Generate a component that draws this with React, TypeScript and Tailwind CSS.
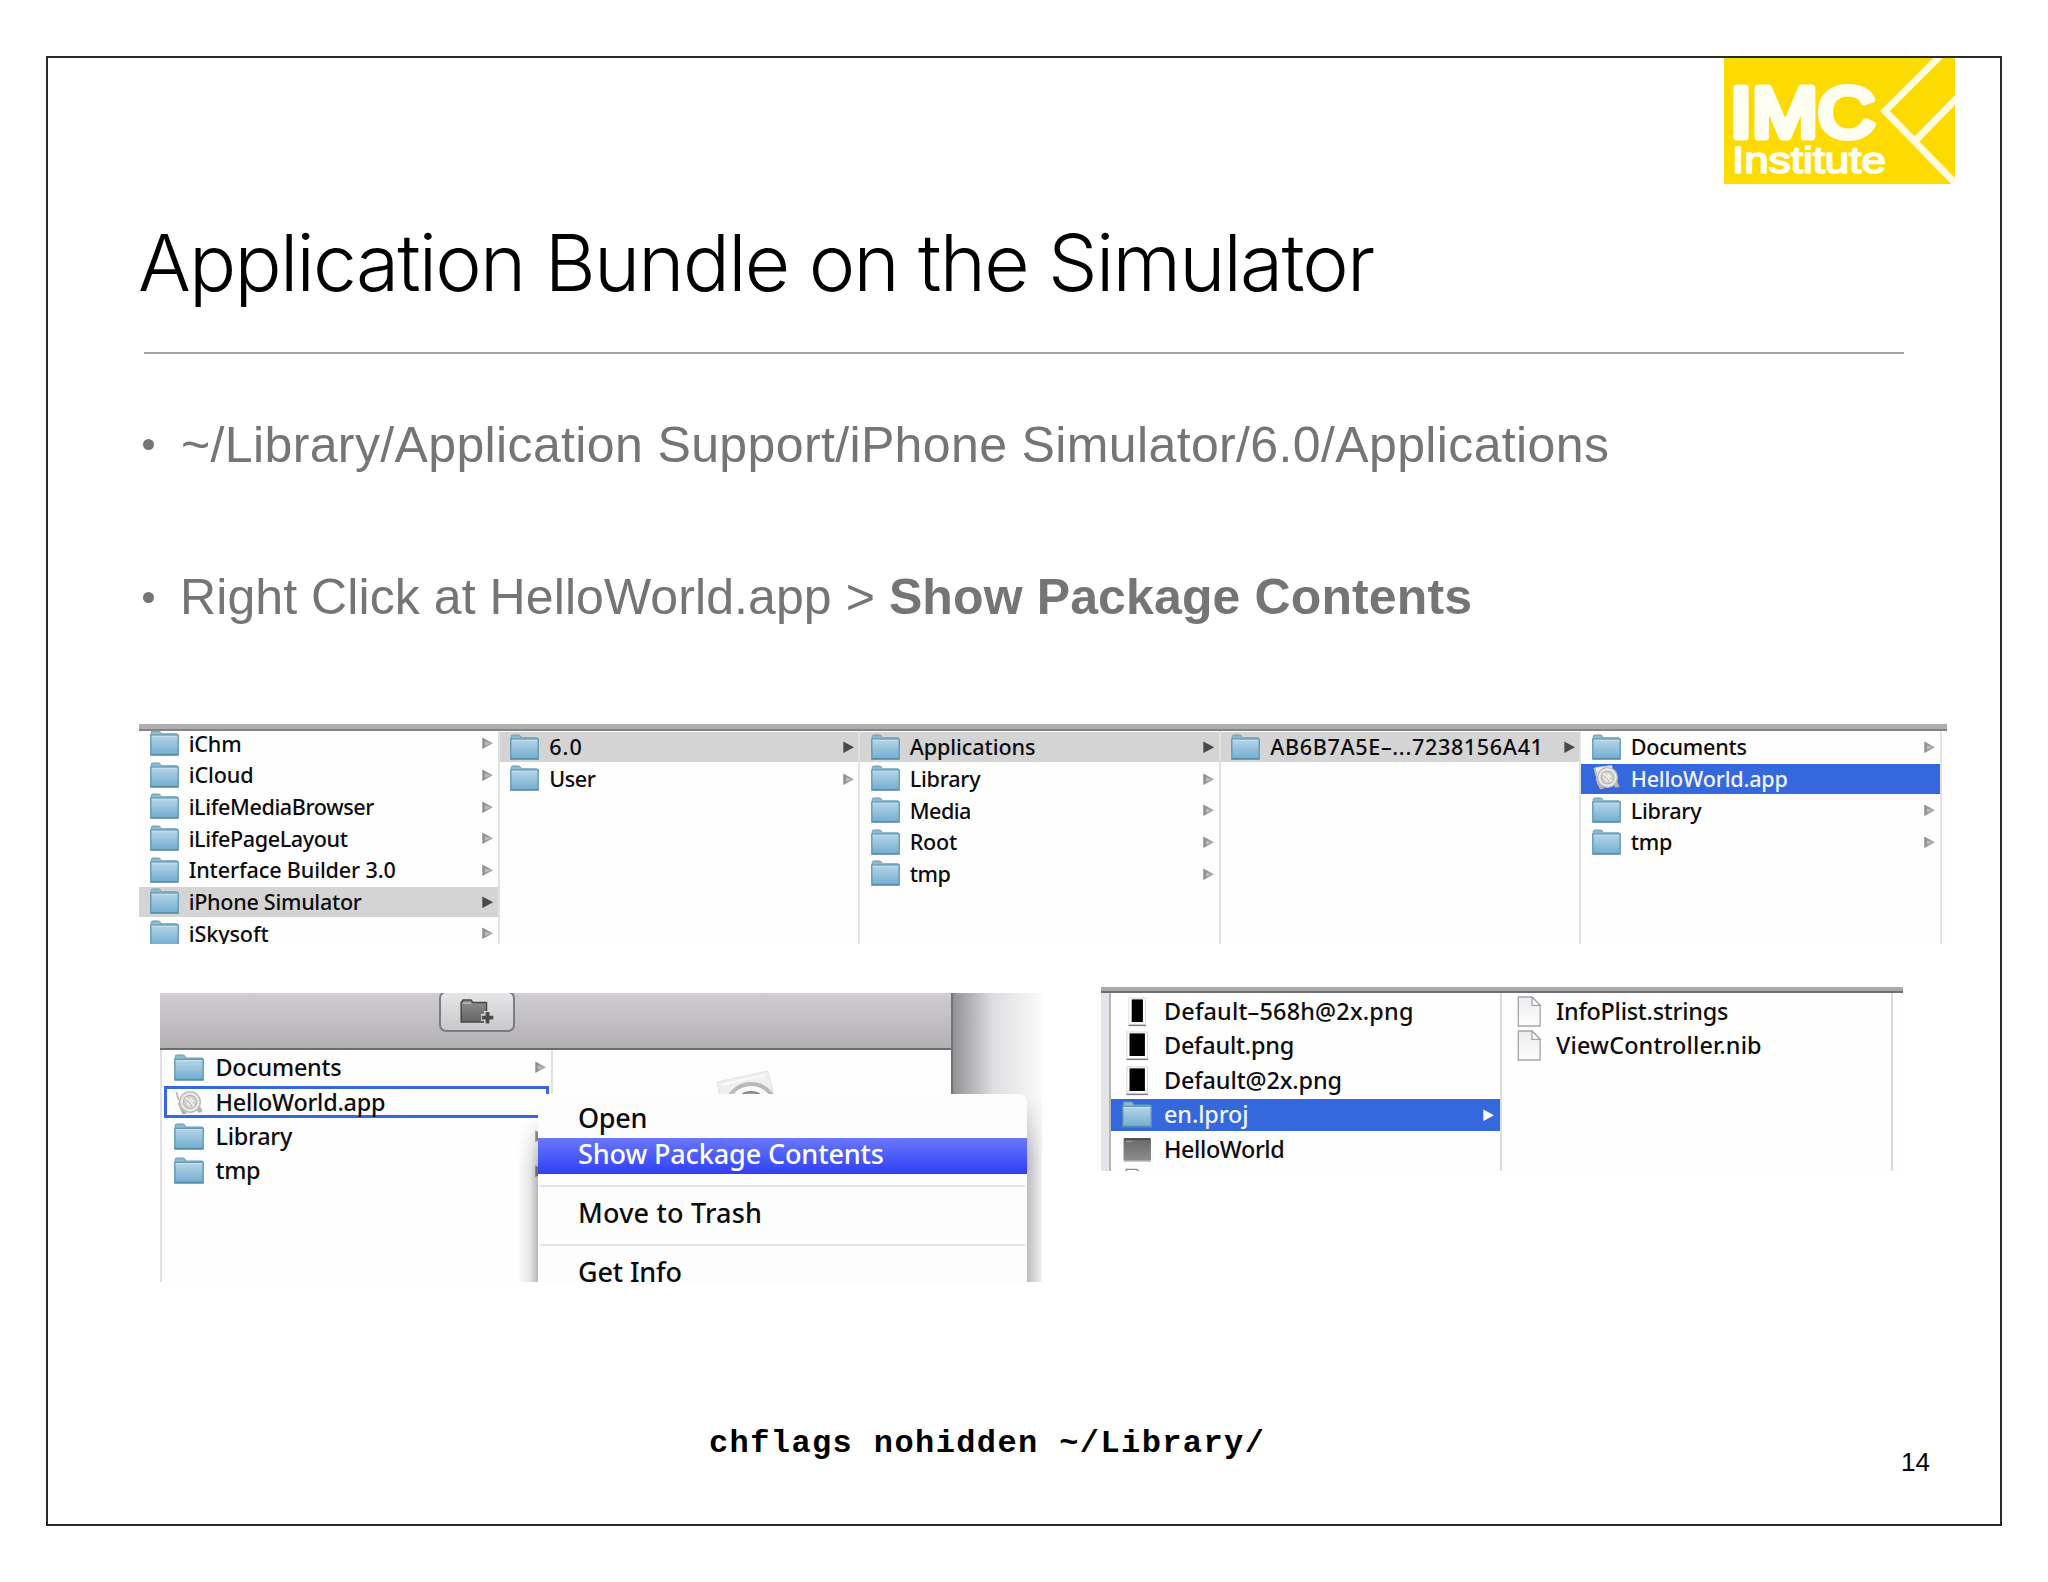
import clsx from "clsx";

type IconKind = "folder" | "app" | "appGhost" | "doc" | "exec" | "tallThumb" | "thumb" | "docTop";

interface Entry {
  name: string;
  icon?: IconKind;
  tracking?: string;
  arrow?: boolean;
  selected?: "gray" | "blue" | "outline";
}

const iPhoneSupport: Entry[] = [
  { name: "iChm", arrow: true, tracking: "tracking-[-0.2px]" },
  { name: "iCloud", arrow: true, tracking: "tracking-[-0.1px]" },
  { name: "iLifeMediaBrowser", arrow: true, tracking: "tracking-[-0.4px]" },
  { name: "iLifePageLayout", arrow: true, tracking: "tracking-[-0.4px]" },
  { name: "Interface Builder 3.0", arrow: true, tracking: "tracking-[-0.15px]" },
  { name: "iPhone Simulator", arrow: true, selected: "gray", tracking: "tracking-[-0.3px]" },
  { name: "iSkysoft", arrow: true, tracking: "tracking-[-0.1px]" },
];

const versions: Entry[] = [
  { name: "6.0", arrow: true, selected: "gray", tracking: "tracking-[1px]" },
  { name: "User", arrow: true, tracking: "tracking-[-0.4px]" },
];

const simulatorRoot: Entry[] = [
  { name: "Applications", arrow: true, selected: "gray", tracking: "tracking-[-0.1px]" },
  { name: "Library", arrow: true },
  { name: "Media", arrow: true, tracking: "tracking-[-0.5px]" },
  { name: "Root", arrow: true },
  { name: "tmp", arrow: true, tracking: "tracking-[-0.5px]" },
];

const apps: Entry[] = [
  { name: "AB6B7A5E–...7238156A41", arrow: true, selected: "gray", tracking: "tracking-[0.64px]" },
];

const bundle: Entry[] = [
  { name: "Documents", arrow: true },
  { name: "HelloWorld.app", icon: "app", selected: "blue", tracking: "tracking-[-0.2px]" },
  { name: "Library", arrow: true },
  { name: "tmp", arrow: true },
];

const bundleMenu: Entry[] = [
  { name: "Documents", arrow: true },
  { name: "HelloWorld.app", icon: "appGhost", selected: "outline" },
  { name: "Library", arrow: true },
  { name: "tmp", arrow: true },
];

const packageFiles: Entry[] = [
  { name: "Default–568h@2x.png", icon: "tallThumb", tracking: "tracking-[0.2px]" },
  { name: "Default.png", icon: "thumb", tracking: "tracking-[-0.2px]" },
  { name: "Default@2x.png", icon: "thumb", tracking: "tracking-[-0.1px]" },
  { name: "en.lproj", arrow: true, selected: "blue", tracking: "tracking-[-0.1px]" },
  { name: "HelloWorld", icon: "exec", tracking: "tracking-[-0.4px]" },
  { name: "", icon: "docTop" },
];

const lprojFiles: Entry[] = [
  { name: "InfoPlist.strings", icon: "doc", tracking: "tracking-[-0.25px]" },
  { name: "ViewController.nib", icon: "doc", tracking: "tracking-[0.15px]" },
];

function Folder() {
  return (
    <svg viewBox="0 0 29 26" className="h-full w-full">
      <defs>
        <linearGradient id="folder" x1="0" y1="0" x2="0" y2="1">
          <stop offset="0" stopColor="#b7d5e8" />
          <stop offset="1" stopColor="#72aed0" />
        </linearGradient>
      </defs>
      <path d="M1.2 5V2.6Q1.2 1 2.8 1H8.6Q10 1 10.6 2.4L11.2 3.8H26.6Q28 3.8 28 5.2V9H1.2Z" fill="#8fb9cd" stroke="#6a9db4" strokeWidth="1" />
      <path d="M.8 5.2H28.2V24.6H.8Z" fill="url(#folder)" stroke="#5f94ae" strokeWidth="1.3" />
      <path d="M1.6 6.2H27.4" stroke="#c9e2f0" strokeWidth="1" />
      <path d="M.4 25.2H28.6" stroke="#55819a" strokeWidth="1" />
    </svg>
  );
}

function AppIcon({ ghost }: { ghost?: boolean }) {
  return (
    <svg viewBox="0 0 29 27" className="h-full w-full">
      {!ghost && <path d="M3 2.5 20 .5 23 15 8 24 5 19Z" fill="#eeeeec" stroke="#cfcfd2" strokeWidth=".6" />}
      <path d="M2 3 4 11M4 14 9 25M22 17 27 23" stroke="#c4beb5" strokeWidth="2" />
      <path d="M4 15 8 25 12 25 9 15ZM23 12 28 22 24 24 20 18Z" fill="#b8b2aa" />
      <circle cx="15.5" cy="13" r="10.3" fill="#e9e9e6" stroke="#bcbbb7" strokeWidth="1.4" />
      <circle cx="15.5" cy="13" r="6.6" fill="#d5d4d0" stroke="#b5b4b0" strokeWidth="1.2" />
      <path d="M11.3 8.6 19.7 17.4M13 13.5 15.5 16.5M16 9.5 18.5 12.5" stroke="#f6f6f4" strokeWidth="1.8" />
      <path d="M12 10.8 17.8 17" stroke="#a3a19b" strokeWidth=".9" />
    </svg>
  );
}

function Icon({ kind = "folder" }: { kind?: IconKind }) {
  switch (kind) {
    case "app":
      return <AppIcon />;
    case "appGhost":
      return <AppIcon ghost />;
    case "doc":
      return (
        <svg viewBox="0 0 29 31" className="h-full w-full">
          <defs>
            <linearGradient id="doc" x1="0" y1="0" x2="0" y2="1">
              <stop offset="0" stopColor="#ededf0" />
              <stop offset="1" stopColor="#fcfcfd" />
            </linearGradient>
          </defs>
          <path d="M3.8 1H17.5L25.6 9.2V30H3.8Z" fill="url(#doc)" stroke="#a5a4a8" strokeWidth="1.3" />
          <path d="M17.5 1V9.4H25.6Z" fill="#fff" stroke="#a5a4a8" strokeWidth="1.3" />
        </svg>
      );
    case "docTop":
      return (
        <svg viewBox="0 0 29 31" className="h-full w-full">
          <path d="M3.8 30V1.4H14L20 6V30Z" fill="#fff" stroke="#8b8b8d" strokeWidth="1.4" />
        </svg>
      );
    case "exec":
      return (
        <svg viewBox="0 0 29 26" className="h-full w-full">
          <defs>
            <linearGradient id="exec" x1="0" y1="0" x2="0" y2="1">
              <stop offset="0" stopColor="#686868" />
              <stop offset="1" stopColor="#8d8d8d" />
            </linearGradient>
          </defs>
          <rect x="1.5" y="2" width="26.5" height="22" rx="1.5" fill="url(#exec)" />
          <path d="M2 3H27.5" stroke="#4c4f4c" strokeWidth="1.6" />
          <path d="M4 5.2H10" stroke="#7fa57f" strokeWidth="1.4" />
          <path d="M1.5 24.2H28" stroke="#bcbcbc" strokeWidth="1.4" />
        </svg>
      );
    case "tallThumb":
      return (
        <svg viewBox="0 0 29 31" className="h-full w-full">
          <rect x="6.4" y="2" width="16.6" height="27" fill="#fff" stroke="#dcdcdc" strokeWidth="1" />
          <path d="M6 29.4H23.4" stroke="#7c7c7c" strokeWidth="1.4" />
          <rect x="9.2" y="3.4" width="11.2" height="22.6" fill="#000" />
        </svg>
      );
    case "thumb":
      return (
        <svg viewBox="0 0 29 31" className="h-full w-full">
          <rect x="4.4" y="2" width="20.6" height="27" fill="#fff" stroke="#d4d4d4" strokeWidth="1" />
          <path d="M4 29.4H25.4" stroke="#7c7c7c" strokeWidth="1.4" />
          <rect x="7" y="3.4" width="15.4" height="22.6" fill="#000" />
        </svg>
      );
    default:
      return <Folder />;
  }
}

function Arrow({ tone }: { tone: "light" | "dark" | "white" }) {
  return (
    <svg viewBox="0 0 12 13" className="h-[12.5px] w-[11.5px]">
      <defs>
        <linearGradient id="arrow" x1="0" y1="0" x2="1" y2="0">
          <stop offset="0" stopColor="#8a8a8a" />
          <stop offset="1" stopColor="#b4b4b4" />
        </linearGradient>
      </defs>
      <path
        d="M.3 .4 11.7 6.5 .3 12.6Z"
        fill={tone === "dark" ? "#4a4a4a" : tone === "white" ? "#fff" : "url(#arrow)"}
      />
      {tone === "light" && <path d="M3 4.6 8.4 6.8 3 9Z" fill="#bdbdbd" />}
    </svg>
  );
}

// Small rows are the wide column browser, large rows are the two lower windows.
function Row({ entry, large }: { entry: Entry; large?: boolean }) {
  const tone = entry.selected === "gray" ? "dark" : entry.selected === "blue" ? "white" : "light";
  const tall = entry.icon === "doc" || entry.icon === "docTop" || entry.icon === "thumb" || entry.icon === "tallThumb";
  return (
    <div
      className={clsx(
        "flex shrink-0 items-center whitespace-pre font-['Noto_Sans','Open_Sans',sans-serif] font-medium",
        large ? "mb-[2px] h-[32.5px] text-[23.4px]" : "mb-[1.7px] h-[30px] pl-[10.7px] pr-[4px] text-[21.6px]",
        entry.selected === "gray" && "bg-[#d4d4d4]",
        entry.selected === "blue" && "bg-[#3568dc]"
      )}
    >
      <div
        className={clsx(
          "shrink-0",
          large ? (tall ? "h-[31px] w-[30px]" : "h-[27px] w-[30px]") : "-mt-[1px] h-[26px] w-[29px]"
        )}
      >
        <Icon kind={entry.icon} />
      </div>
      <div
        className={clsx(
          "flex-1 leading-none",
          large ? "ml-[12px]" : "ml-[10px]",
          entry.selected === "blue" ? "text-[#f1f4ff]" : "text-[#0c0c0e]",
          entry.tracking ?? "tracking-[-0.25px]"
        )}
      >
        {entry.name}
      </div>
      {entry.arrow && <Arrow tone={tone} />}
    </div>
  );
}

function Column({ entries, first }: { entries: Entry[]; first?: boolean }) {
  return (
    <div
      className={clsx(
        "w-[360.5px] shrink-0 border-r-2 border-[#e3e1e6]",
        first ? "-mt-[2.5px] h-[216px]" : "h-full pt-[1.2px]"
      )}
    >
      {entries.map((entry) => (
        <Row key={entry.name} entry={entry} />
      ))}
    </div>
  );
}

function ColumnBrowser() {
  return (
    <div className="ml-[91px] mt-[96.5px] flex h-[220px] w-[1808px] flex-col overflow-hidden bg-[#fefefe]">
      <div className="h-[7px] shrink-0 border-b-2 border-[#858385] bg-[#aeaeae]" />
      <div className="flex h-[213px] overflow-hidden">
        <Column entries={iPhoneSupport} first />
        <Column entries={versions} />
        <Column entries={simulatorRoot} />
        <Column entries={apps} />
        <Column entries={bundle} />
      </div>
    </div>
  );
}

function MenuWindow() {
  return (
    <div className="relative mt-[6px] h-[289px] w-[882px] overflow-hidden bg-[#fefefe]">
      <div className="flex h-full">
        <div className="h-full w-[791px] shrink-0">
          <div className="flex h-[57px] items-start border-b-2 border-[#6c6b6d] bg-linear-to-b from-[#d0ced1] to-[#b2b0b3] pl-[279px]">
            <div className="-mt-[2px] flex h-[41px] w-[76px] items-center justify-center rounded-[7px] border-2 border-[#7d7c7e] bg-linear-to-b from-[#e6e5e7] to-[#c9c8ca]">
              <svg viewBox="0 0 34 25" className="h-[25px] w-[34px]">
                <defs>
                  <linearGradient id="newFolder" x1="0" y1="0" x2="0" y2="1">
                    <stop offset="0" stopColor="#8f8f8f" />
                    <stop offset="1" stopColor="#646464" />
                  </linearGradient>
                </defs>
                <path d="M1.2 23V3.8L3 1H11L13 3.6H26.5V23Z" fill="url(#newFolder)" stroke="#484848" strokeWidth="1.5" />
                <path d="M3 4.2H11" stroke="#c5c5c5" strokeWidth="1.3" />
                <path d="M27.5 12V25M21 18.5H34" stroke="#d6d5d7" strokeWidth="7" />
                <path d="M27.5 13V24.5M21.8 18.7H33.3" stroke="#4c4c4c" strokeWidth="3.8" />
              </svg>
            </div>
          </div>
          <div className="flex h-[232px]">
            <div className="w-[393px] shrink-0 border-l-2 border-r-2 border-[#e3e1e6] pt-[1px]">
              {bundleMenu.map((entry) => (
                <div
                  key={entry.name}
                  className={clsx(
                    "mb-[2px] ml-[2px] h-[32.5px]",
                    entry.selected === "outline"
                      ? "flex w-[385px] flex-col justify-center border-[3px] border-[#3568dc] pl-[6.5px] pt-[3px]"
                      : "pl-[9.5px] pr-[4.5px]"
                  )}
                >
                  <Row entry={entry} large />
                </div>
              ))}
            </div>
            <div className="pl-[163px] pt-[20px]">
              <svg viewBox="0 0 60 34" className="h-[34px] w-[60px]">
                <path d="M1 12 52 1 60 34H5Z" fill="#efefef" stroke="#e2e2e2" />
                <path d="M6 15 49 5" stroke="#fafafa" strokeWidth="2" />
                <circle cx="35" cy="39" r="25" fill="#fafafa" stroke="#b9b9b9" strokeWidth="4" />
                <circle cx="35" cy="39" r="17" fill="#aaa" stroke="#8a8a8a" strokeWidth="2" />
              </svg>
            </div>
          </div>
        </div>
        <div className="h-full w-[91px] border-l-2 border-[#747376] bg-linear-to-r from-[#929194] via-[#dedde0] via-45% to-[#fafafa]" />
      </div>

      {/* Context menu with its soft shadow */}
      <div className="absolute left-[358px] top-[126px] h-[163px] w-[20px] bg-linear-to-r from-transparent via-black/10 via-60% to-black/28 [mask-image:linear-gradient(to_bottom,transparent,black_50px)]" />
      <div className="absolute left-[867px] top-[104px] h-[185px] w-[15px] bg-linear-to-r from-[#bdbcbf] to-[#f0f0f1] [mask-image:linear-gradient(to_bottom,transparent,black_60px)]" />
      <div className="absolute left-[378px] top-[101px] h-[200px] w-[489px] rounded-t-[8px] bg-[#fdfdfd] font-['Noto_Sans','Open_Sans',sans-serif] text-[27px] font-medium text-[#0c0c0e]">
        <div className="flex h-[43.5px] items-center pl-[40px] pt-[5px] tracking-[-0.3px]">Open</div>
        <div className="flex h-[36px] items-center bg-linear-to-b from-[#6a76fb] to-[#323cf8] pb-[2px] pl-[40px] tracking-[-0.12px] text-white">
          Show Package Contents
        </div>
        <div className="mx-[2px] h-[13px] border-b-2 border-[#e4e4e5]" />
        <div className="flex h-[57px] items-center pb-[4px] pl-[40px] tracking-[0.2px]">Move to Trash</div>
        <div className="mx-[2px] h-[2px] bg-[#e4e4e5]" />
        <div className="flex h-[50px] items-center pl-[40px] pt-[3px] tracking-[-0.15px]">Get Info</div>
      </div>
    </div>
  );
}

function PackageWindow() {
  return (
    <div className="flex h-[184px] w-[802px] flex-col overflow-hidden bg-[#fefefe]">
      <div className="h-[6px] shrink-0 border-b-2 border-[#6e6e70] bg-[#a9a9ab]" />
      <div className="flex flex-1 overflow-hidden">
        <div className="w-[10px] shrink-0 border-r-2 border-[#b5b5b8] bg-[#e3e4e8]" />
        <div className="w-[391px] shrink-0 border-r-2 border-[#dcdbde] pt-[2px]">
          {packageFiles.map((entry) => (
            <div key={entry.icon + entry.name} className={clsx("mb-[2px] h-[32.5px] pl-[11px] pr-[6px]", entry.selected === "blue" && "bg-[#3568dc]")}>
              <Row entry={entry} large />
            </div>
          ))}
        </div>
        <div className="w-[391px] shrink-0 border-r-2 border-[#dcdbde] pl-[12px] pt-[2px]">
          {lprojFiles.map((entry) => (
            <Row key={entry.name} entry={entry} large />
          ))}
        </div>
      </div>
    </div>
  );
}

function Logo() {
  return (
    <svg viewBox="0 0 231 126" className="h-[126px] w-[231px]">
      <rect width="231" height="126" fill="#fddb00" />
      <g fill="none" stroke="#fffbe0" strokeWidth="7">
        <path d="M218 -4 161 53 233 127" />
        <path d="M192 82 234 39" />
      </g>
      <g fill="#fffef2" stroke="#fffef2" strokeLinejoin="round" className="font-['Liberation_Sans',Arial,sans-serif]">
        <text x="6" y="79" fontSize="71" strokeWidth="7" textLength="145" lengthAdjust="spacingAndGlyphs">IMC</text>
        <text x="8" y="115" fontSize="36" strokeWidth="1.7" textLength="154" lengthAdjust="spacingAndGlyphs">Institute</text>
      </g>
    </svg>
  );
}

export default function App() {
  return (
    <div className="h-[1582px] w-[2048px] overflow-hidden bg-white pl-[46px] pt-[56px]">
      <div className="flex h-[1470px] w-[1956px] flex-col border-2 border-[#2a2a2a]">
        <div className="flex justify-end pr-[45px]">
          <Logo />
        </div>

        <h1 className="ml-[90px] mt-[31px] whitespace-pre font-['Inter',sans-serif] text-[78.5px] font-light leading-[96px] tracking-[-1.8px] text-black">
          Application Bundle on the Simulator
        </h1>
        <div className="ml-[96px] mt-[41px] h-[2px] w-[1760px] bg-[#a3a3a3]" />

        <ul className="ml-[95px] mt-[60.5px] font-['Liberation_Sans',Arial,sans-serif] text-[50px] leading-[60px] text-[#757575]">
          <li className="flex items-center whitespace-pre">
            <span className="h-[11px] w-[11px] rounded-full bg-[#757575]" />
            <span className="ml-[27px] tracking-[0.37px]">~/Library/Application Support/iPhone Simulator/6.0/Applications</span>
          </li>
          <li className="mt-[92.5px] flex items-center whitespace-pre">
            <span className="h-[11px] w-[11px] rounded-full bg-[#757575]" />
            <span className="ml-[26px] tracking-[0.08px]">Right Click at HelloWorld.app &gt; </span>
            <b className="tracking-[0.12px]">Show Package Contents</b>
          </li>
        </ul>

        <div className="pt-[0.5px]">
          <ColumnBrowser />
        </div>

        <div className="ml-[112px] mt-[43px] flex items-start">
          <MenuWindow />
          <div className="ml-[59px]">
            <PackageWindow />
          </div>
        </div>

        <div className="mt-[142px] flex items-start">
          <code className="ml-[661px] whitespace-pre font-['Liberation_Mono',monospace] text-[32px] font-bold leading-[40px] tracking-[1.4px] text-black">
            chflags nohidden ~/Library/
          </code>
          <span className="ml-auto mr-[70px] mt-[20px] font-['Liberation_Sans',Arial,sans-serif] text-[26px] leading-[36px] text-black">14</span>
        </div>
      </div>
    </div>
  );
}
